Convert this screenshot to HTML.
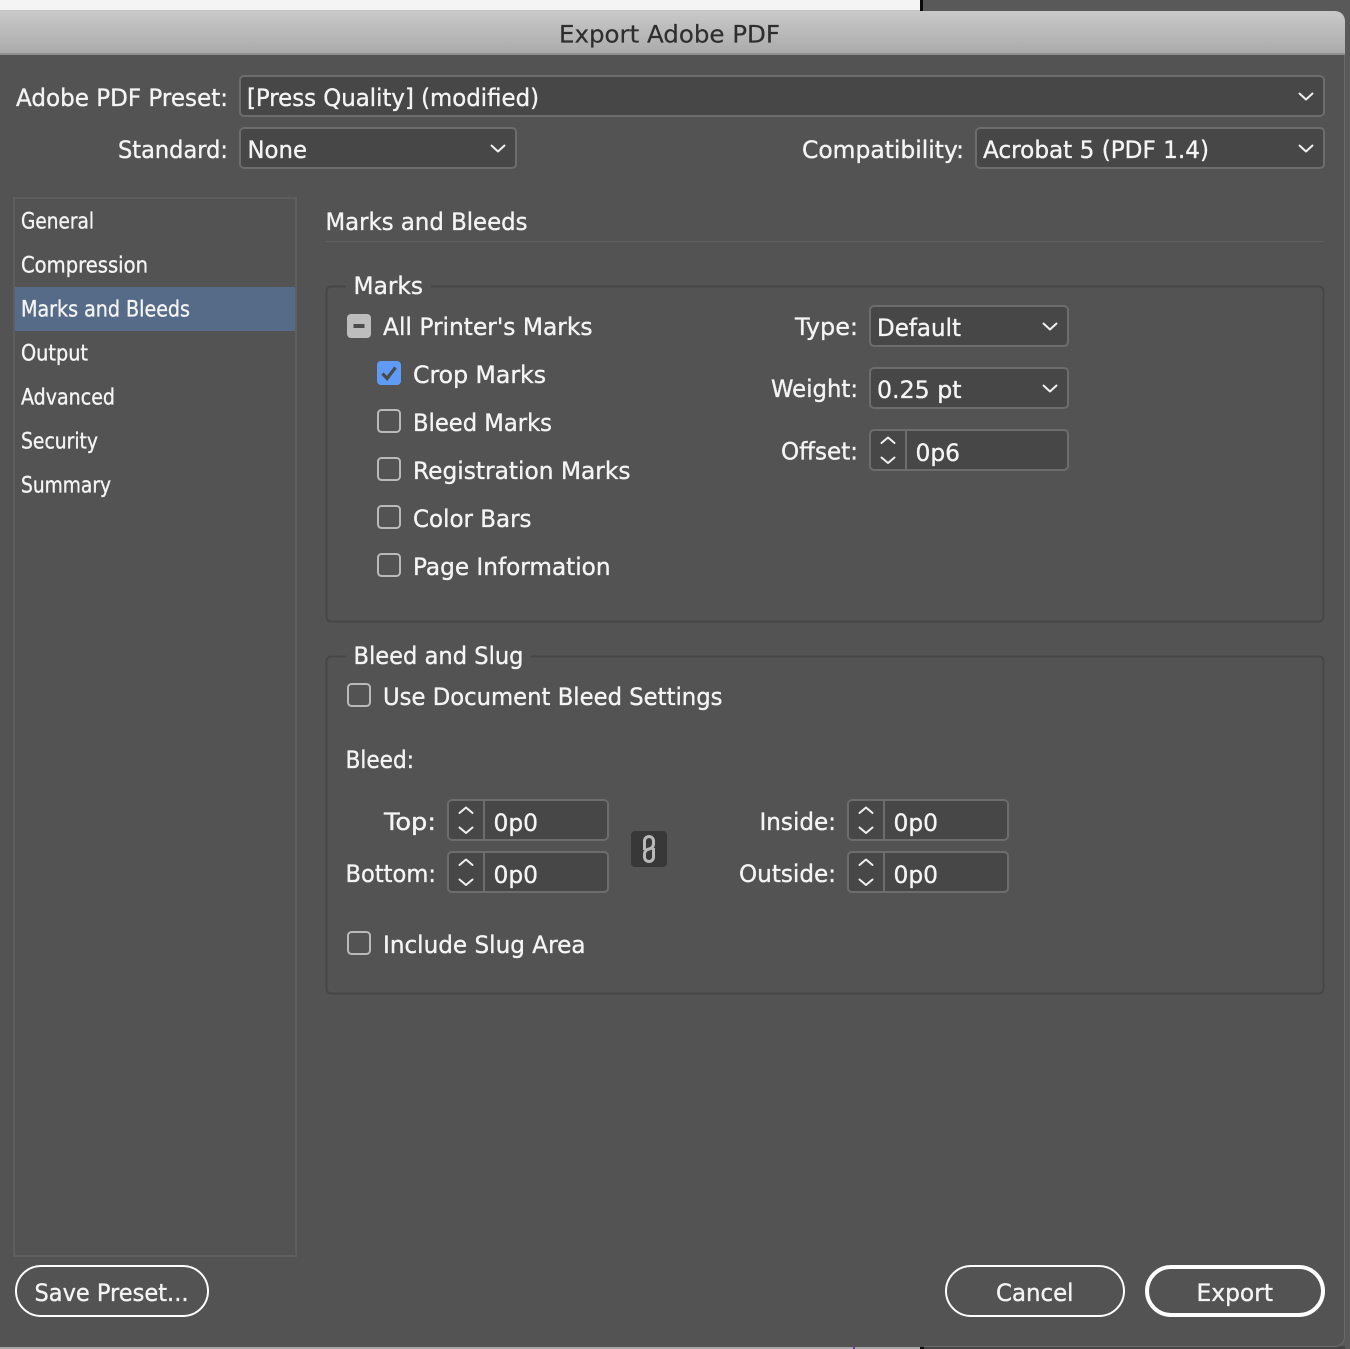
<!DOCTYPE html>
<html>
<head>
<meta charset="utf-8">
<title>Export Adobe PDF</title>
<style>
html,body{margin:0;padding:0;background:#595959;width:1350px;height:1349px;overflow:hidden}
svg{display:block;position:absolute;left:0;top:0}
text{font-family:"DejaVu Sans","Liberation Sans",sans-serif;fill:#f4f4f4;stroke:#f4f4f4;stroke-width:.35px;font-size:24px}
.s{font-size:22px}
.t{fill:#2e2e2e;stroke:#2e2e2e;stroke-width:.2px}
.f{fill:#474747;stroke:#6d6d6d;stroke-width:2}
.c{fill:none;stroke:#efefef;stroke-width:2;stroke-linecap:round;stroke-linejoin:round}
.b{fill:none;stroke:#b9b9b9;stroke-width:2}
.g{fill:none;stroke:#474747;stroke-width:2}
.btn{fill:none;stroke:#fff;stroke-width:2}
.d{stroke:#6d6d6d;stroke-width:2}
</style>
</head>
<body>
<svg width="1350" height="1349" viewBox="0 0 1350 1349" xmlns="http://www.w3.org/2000/svg">
<defs>
<linearGradient id="tb" x1="0" y1="0" x2="0" y2="1"><stop offset="0" stop-color="#c9c9c9"/><stop offset="1" stop-color="#aaaaaa"/></linearGradient>
</defs>
<rect x="0" y="0" width="920" height="11" fill="#f4f4f4"/>
<rect x="0" y="10" width="920" height="1" fill="#c4c4c4"/>
<rect x="920" y="0" width="3" height="12" fill="#0a0a0a"/>
<rect x="923" y="0" width="427" height="12" fill="#595959"/>
<rect x="0" y="1346" width="920" height="3" fill="#a8a8a8"/>
<rect x="853" y="1346" width="2" height="3" fill="#6a35c0"/>
<rect x="920" y="1346" width="4" height="3" fill="#0a0a0a"/>
<rect x="924" y="1346" width="426" height="3" fill="#454545"/>
<rect x="1345" y="0" width="5" height="1349" fill="#595959"/>
<path d="M0 11H1335a10 10 0 0 1 10 10V1337a10 10 0 0 1-10 10H0Z" fill="#535353"/>
<path d="M1344.500 54V1337a9.500 9.500 0 0 1-9.500 9.500H924" fill="none" stroke="#6a6a6a" stroke-width="1"/>
<path d="M0 11H1335a10 10 0 0 1 10 10V54H0Z" fill="url(#tb)"/>
<rect x="0" y="53" width="1345" height="2" fill="#8f8f8f"/>
<text x="559" y="42.500" textLength="221" lengthAdjust="spacingAndGlyphs" class="t">Export Adobe PDF</text>

<text x="16" y="106" textLength="212" lengthAdjust="spacingAndGlyphs">Adobe PDF Preset:</text>
<rect x="240" y="76" width="1084" height="40" rx="4" class="f"/>
<text x="247" y="106" textLength="292" lengthAdjust="spacingAndGlyphs">[Press Quality] (modified)</text>
<path d="M1299.500 93.500L1306 99.500L1312.500 93.500" class="c"/>

<text x="118" y="158" textLength="110" lengthAdjust="spacingAndGlyphs">Standard:</text>
<rect x="240" y="128" width="276" height="40" rx="4" class="f"/>
<text x="247.500" y="158" textLength="59.500" lengthAdjust="spacingAndGlyphs">None</text>
<path d="M491.500 145.500L498 151.500L504.500 145.500" class="c"/>

<text x="802" y="158" textLength="162" lengthAdjust="spacingAndGlyphs">Compatibility:</text>
<rect x="976" y="128" width="348" height="40" rx="4" class="f"/>
<text x="983" y="158" textLength="226" lengthAdjust="spacingAndGlyphs">Acrobat 5 (PDF 1.4)</text>
<path d="M1299.500 145.500L1306 151.500L1312.500 145.500" class="c"/>

<rect x="14" y="198" width="282" height="1058" fill="none" stroke="#5e5e5e" stroke-width="2"/>
<rect x="15" y="287" width="280" height="44" fill="#566b87"/>
<text class="s" x="21" y="228.500" textLength="73" lengthAdjust="spacingAndGlyphs">General</text>
<text class="s" x="21" y="272.500" textLength="127" lengthAdjust="spacingAndGlyphs">Compression</text>
<text class="s" x="21" y="316.500" textLength="169" lengthAdjust="spacingAndGlyphs">Marks and Bleeds</text>
<text class="s" x="21" y="360.500" textLength="67" lengthAdjust="spacingAndGlyphs">Output</text>
<text class="s" x="21" y="404.500" textLength="94" lengthAdjust="spacingAndGlyphs">Advanced</text>
<text class="s" x="21" y="448.500" textLength="77" lengthAdjust="spacingAndGlyphs">Security</text>
<text class="s" x="21" y="492.500" textLength="90" lengthAdjust="spacingAndGlyphs">Summary</text>

<text x="325.500" y="230" textLength="202" lengthAdjust="spacingAndGlyphs">Marks and Bleeds</text>
<rect x="326" y="241" width="998" height="1" fill="#5f5f5f"/>

<path d="M346 286.500H331a4.500 4.500 0 0 0-4.500 4.500V617a4.500 4.500 0 0 0 4.500 4.500H1319a4.500 4.500 0 0 0 4.500-4.500V291a4.500 4.500 0 0 0-4.500-4.500H431" class="g"/>
<text x="353.500" y="294" textLength="69.500" lengthAdjust="spacingAndGlyphs">Marks</text>

<rect x="347" y="314" width="24" height="24" rx="4" fill="#bdbdbd"/>
<rect x="353.500" y="324" width="11" height="4" fill="#4c4c4c"/>
<text x="383" y="335" textLength="209.500" lengthAdjust="spacingAndGlyphs">All Printer's Marks</text>

<rect x="377" y="361" width="24" height="24" rx="4" fill="#5f9af5"/>
<path d="M382.500 373.500L387 378.500L395.500 367.500" fill="none" stroke="#4a4a4a" stroke-width="3.200"/>
<text x="413" y="383" textLength="133" lengthAdjust="spacingAndGlyphs">Crop Marks</text>

<rect x="378" y="410" width="22" height="22" rx="3.500" class="b"/>
<text x="413" y="431" textLength="139" lengthAdjust="spacingAndGlyphs">Bleed Marks</text>
<rect x="378" y="458" width="22" height="22" rx="3.500" class="b"/>
<text x="413" y="479" textLength="217.500" lengthAdjust="spacingAndGlyphs">Registration Marks</text>
<rect x="378" y="506" width="22" height="22" rx="3.500" class="b"/>
<text x="413" y="527" textLength="118.500" lengthAdjust="spacingAndGlyphs">Color Bars</text>
<rect x="378" y="554" width="22" height="22" rx="3.500" class="b"/>
<text x="413" y="575" textLength="197.500" lengthAdjust="spacingAndGlyphs">Page Information</text>

<text x="795" y="335" textLength="63" lengthAdjust="spacingAndGlyphs">Type:</text>
<rect x="870" y="306" width="198" height="40" rx="4" class="f"/>
<text x="877" y="336" textLength="84" lengthAdjust="spacingAndGlyphs">Default</text>
<path d="M1043.500 323.500L1050 329.500L1056.500 323.500" class="c"/>

<text x="771" y="397" textLength="87" lengthAdjust="spacingAndGlyphs">Weight:</text>
<rect x="870" y="368" width="198" height="40" rx="4" class="f"/>
<text x="877" y="398" textLength="84.500" lengthAdjust="spacingAndGlyphs">0.25 pt</text>
<path d="M1043.500 385.500L1050 391.500L1056.500 385.500" class="c"/>

<text x="781" y="459.500" textLength="77" lengthAdjust="spacingAndGlyphs">Offset:</text>
<rect x="870" y="430" width="198" height="40" rx="4" class="f"/>
<path d="M906 431V469" class="d"/>
<path d="M881.500 443L888 437.500L894.500 443M881.500 457.500L888 463L894.500 457.500" class="c"/>
<text x="915.500" y="461" textLength="44.500" lengthAdjust="spacingAndGlyphs">0p6</text>

<path d="M346 656.500H331a4.500 4.500 0 0 0-4.500 4.500V989a4.500 4.500 0 0 0 4.500 4.500H1319a4.500 4.500 0 0 0 4.500-4.500V661a4.500 4.500 0 0 0-4.500-4.500H531" class="g"/>
<text x="353.500" y="664" textLength="170" lengthAdjust="spacingAndGlyphs">Bleed and Slug</text>

<rect x="348" y="684" width="22" height="22" rx="3.500" class="b"/>
<text x="383" y="705" textLength="339.500" lengthAdjust="spacingAndGlyphs">Use Document Bleed Settings</text>
<text x="345.500" y="768" textLength="68.500" lengthAdjust="spacingAndGlyphs">Bleed:</text>

<text x="384" y="830" textLength="52" lengthAdjust="spacingAndGlyphs">Top:</text>
<rect x="448" y="800" width="160" height="40" rx="4" class="f"/>
<path d="M484 801V839" class="d"/>
<path d="M459.500 813L466 807.500L472.500 813M459.500 827.500L466 833L472.500 827.500" class="c"/>
<text x="493.500" y="831" textLength="44.500" lengthAdjust="spacingAndGlyphs">0p0</text>

<text x="345.500" y="882" textLength="90.500" lengthAdjust="spacingAndGlyphs">Bottom:</text>
<rect x="448" y="852" width="160" height="40" rx="4" class="f"/>
<path d="M484 853V891" class="d"/>
<path d="M459.500 865L466 859.500L472.500 865M459.500 879.500L466 885L472.500 879.500" class="c"/>
<text x="493.500" y="883" textLength="44.500" lengthAdjust="spacingAndGlyphs">0p0</text>

<rect x="631" y="831" width="36" height="36" rx="4" fill="#383838"/>
<path d="M644.500 850V841a4.500 4.500 0 0 1 9 0V843.500Q653.500 848 649 849T644.500 854.500V857a4.500 4.500 0 0 0 9 0V848" fill="none" stroke="#b9b9b9" stroke-width="3"/>

<text x="759.500" y="830" textLength="76.500" lengthAdjust="spacingAndGlyphs">Inside:</text>
<rect x="848" y="800" width="160" height="40" rx="4" class="f"/>
<path d="M884 801V839" class="d"/>
<path d="M859.500 813L866 807.500L872.500 813M859.500 827.500L866 833L872.500 827.500" class="c"/>
<text x="893.500" y="831" textLength="44.500" lengthAdjust="spacingAndGlyphs">0p0</text>

<text x="739" y="882" textLength="97" lengthAdjust="spacingAndGlyphs">Outside:</text>
<rect x="848" y="852" width="160" height="40" rx="4" class="f"/>
<path d="M884 853V891" class="d"/>
<path d="M859.500 865L866 859.500L872.500 865M859.500 879.500L866 885L872.500 879.500" class="c"/>
<text x="893.500" y="883" textLength="44.500" lengthAdjust="spacingAndGlyphs">0p0</text>

<rect x="348" y="932" width="22" height="22" rx="3.500" class="b"/>
<text x="383" y="953" textLength="202.500" lengthAdjust="spacingAndGlyphs">Include Slug Area</text>

<rect x="16" y="1266" width="192" height="50" rx="25" class="btn"/>
<text x="34.500" y="1301" textLength="154" lengthAdjust="spacingAndGlyphs">Save Preset...</text>
<rect x="946" y="1266" width="178" height="50" rx="25" class="btn"/>
<text x="996" y="1301" textLength="77.500" lengthAdjust="spacingAndGlyphs">Cancel</text>
<rect x="1147" y="1267" width="176" height="48" rx="24" fill="none" stroke="#fff" stroke-width="4"/>
<text x="1196.500" y="1301" textLength="76.500" lengthAdjust="spacingAndGlyphs">Export</text>
</svg>
</body>
</html>
